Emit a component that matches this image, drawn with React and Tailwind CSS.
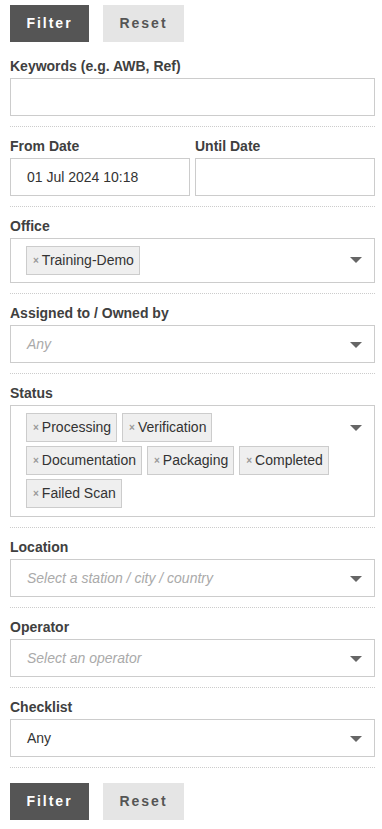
import React from 'react';

const font = { fontFamily: '"Liberation Sans", Arial, sans-serif' };

const Buttons = () => (
  <div className="flex gap-[14px]">
    <button className="h-[37px] w-[79px] bg-[#555555] text-[14px] font-bold tracking-[2px] text-white">
      Filter
    </button>
    <button className="h-[37px] w-[81px] bg-[#e5e5e5] text-[14px] font-bold tracking-[2px] text-[#555555]">
      Reset
    </button>
  </div>
);

const Label = ({ children }) => (
  <div className="mb-[2px] h-[20px] text-[14px] font-bold leading-[20px] text-[#404040]">{children}</div>
);

const Arrow = ({ top }) => (
  <span className={`absolute right-[12px] ${top} h-0 w-0 border-x-[6px] border-t-[6px] border-x-transparent border-t-[#666666]`} />
);

const Chip = ({ children }) => (
  <span className="flex h-[29px] items-center border border-[#cccccc] bg-[#efefef] pl-[6px] pr-[5px] text-[14px] text-[#333333]">
    <span className="mr-[3px] text-[10px] font-bold leading-none text-[#999999]">×</span>
    {children}
  </span>
);

const Section = ({ label, children, first }) => (
  <div className={`${first ? 'pt-[14px]' : 'pt-[9px]'} border-b border-dotted border-[#cccccc] pb-[10px]`}>
    {label && <Label>{label}</Label>}
    {children}
  </div>
);

const Select = ({ text, placeholder }) => (
  <div className="relative flex h-[38px] items-center border border-[#cccccc] pl-[16px]">
    {placeholder ? (
      <span className="text-[14px] italic text-[#aaaaaa]">{placeholder}</span>
    ) : (
      <span className="text-[14px] text-[#333333]">{text}</span>
    )}
    <Arrow top="top-[16px]" />
  </div>
);

const statuses = ['Processing', 'Verification', 'Documentation', 'Packaging', 'Completed', 'Failed Scan'];

export default function App() {
  return (
    <div className="min-h-[829px] bg-white pl-[10px] pt-[5px]" style={font}>
      <div className="w-[365px]">
        <Buttons />

        <Section label="Keywords (e.g. AWB, Ref)" first>
          <div className="h-[38px] border border-[#cccccc]" />
        </Section>

        <Section>
          <div className="grid grid-cols-2 gap-x-[5px]">
            <div>
              <Label>From Date</Label>
              <div className="flex h-[38px] items-center border border-[#cccccc] pl-[16px] text-[14px] text-[#333333]">
                01 Jul 2024 10:18
              </div>
            </div>
            <div>
              <Label>Until Date</Label>
              <div className="h-[38px] border border-[#cccccc]" />
            </div>
          </div>
        </Section>

        <Section label="Office">
          <div className="relative flex h-[45px] items-center border border-[#cccccc] pl-[15px]">
            <Chip>Training-Demo</Chip>
            <Arrow top="top-[18px]" />
          </div>
        </Section>

        <Section label="Assigned to / Owned by">
          <Select placeholder="Any" />
        </Section>

        <Section label="Status">
          <div className="relative border border-[#cccccc] pb-[8px] pl-[15px] pr-[43px] pt-[7px]">
            <div className="flex flex-wrap gap-x-[5px] gap-y-[4px]">
              {statuses.map((s) => (
                <Chip key={s}>{s}</Chip>
              ))}
            </div>
            <Arrow top="top-[19px]" />
          </div>
        </Section>

        <Section label="Location">
          <Select placeholder="Select a station / city / country" />
        </Section>

        <Section label="Operator">
          <Select placeholder="Select an operator" />
        </Section>

        <Section label="Checklist">
          <Select text="Any" />
        </Section>

        <div className="pt-[15px]">
          <Buttons />
        </div>
      </div>
    </div>
  );
}
